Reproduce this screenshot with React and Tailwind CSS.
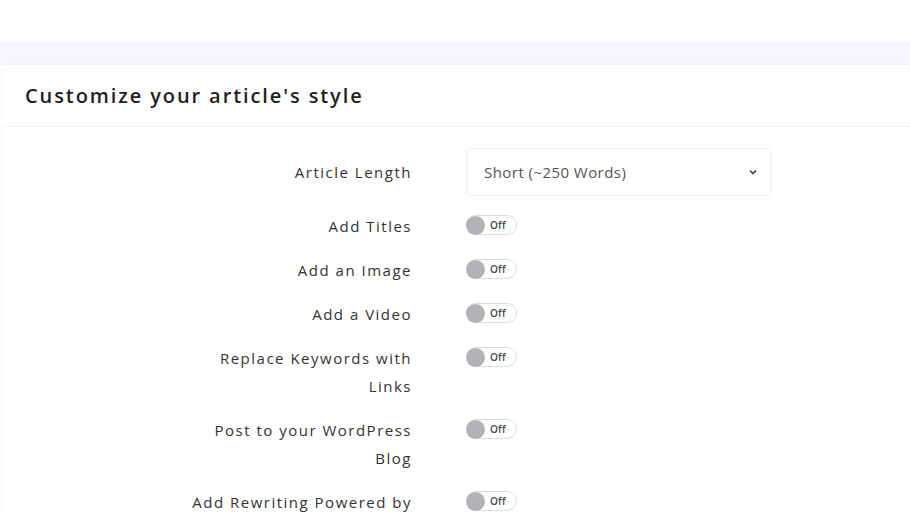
import React, { useState } from 'react';

const options = [
  { key: 'titles', label: 'Add Titles' },
  { key: 'image', label: 'Add an Image' },
  { key: 'video', label: 'Add a Video' },
  { key: 'links', label: 'Replace Keywords with Links' },
  { key: 'wordpress', label: 'Post to your WordPress Blog' },
  { key: 'rewriting', label: 'Add Rewriting Powered by Spin Rewriter' },
];

const Toggle = ({ on, onClick }) => (
  <button
    onClick={onClick}
    className="flex items-center h-[20px] w-[51px] rounded-full border border-[#dcdce0] bg-white pr-[6px]"
  >
    <span className="h-[19px] w-[19px] -ml-px rounded-full bg-[#b3b3b7]" />
    <span className="ml-[5px] text-[10px] font-semibold text-[#444] tracking-wide">{on ? 'On' : 'Off'}</span>
  </button>
);

const App = () => {
  const [toggles, setToggles] = useState({});

  return (
    <div className="w-[910px] h-[512px] overflow-hidden bg-white flex flex-col font-['Open_Sans',sans-serif] text-[#2b2b2b]">
      <div className="h-[42px] shrink-0 bg-white" />
      <div className="h-[23px] shrink-0 bg-[#f6f7fb]" />
      <div className="flex-1 ml-[3px] bg-white shadow-[0_0_4px_rgba(0,0,0,0.05)]">
        <div className="h-[62px] flex items-center px-[22px] border-b border-[#f0f0f3]">
          <h2 className="text-[20px] font-semibold tracking-[0.095em] text-[#1f1f1f]">Customize your article's style</h2>
        </div>

        <div className="pt-[21px] flex flex-col gap-[16px]">
          <div className="flex items-center">
            <label className="w-[409px] text-right text-[15px] font-medium leading-[28px] tracking-[0.1em] text-[#333]">Article Length</label>
            <div className="ml-[54px] w-[305px] h-[48px] border border-[#f1f1f3] rounded-[3px] flex items-center justify-between pl-[17px] pr-[12px] text-[15px] tracking-[0.03em] text-[#555]">
              <span>Short (~250 Words)</span>
              <svg width="10" height="10" viewBox="0 0 10 10" fill="none" stroke="#444" strokeWidth="1.6">
                <path d="M2 3.5 L5 6.5 L8 3.5" />
              </svg>
            </div>
          </div>

          {options.map(opt => (
            <div key={opt.key} className="flex items-start">
              <label className="w-[409px] pl-[176px] text-right text-[15px] font-medium leading-[28px] tracking-[0.1em] text-[#333]">{opt.label}</label>
              <div className="ml-[54px] pt-[3px]">
                <Toggle
                  on={!!toggles[opt.key]}
                  onClick={() => setToggles({ ...toggles, [opt.key]: !toggles[opt.key] })}
                />
              </div>
            </div>
          ))}
        </div>
      </div>
    </div>
  );
};

export default App;
